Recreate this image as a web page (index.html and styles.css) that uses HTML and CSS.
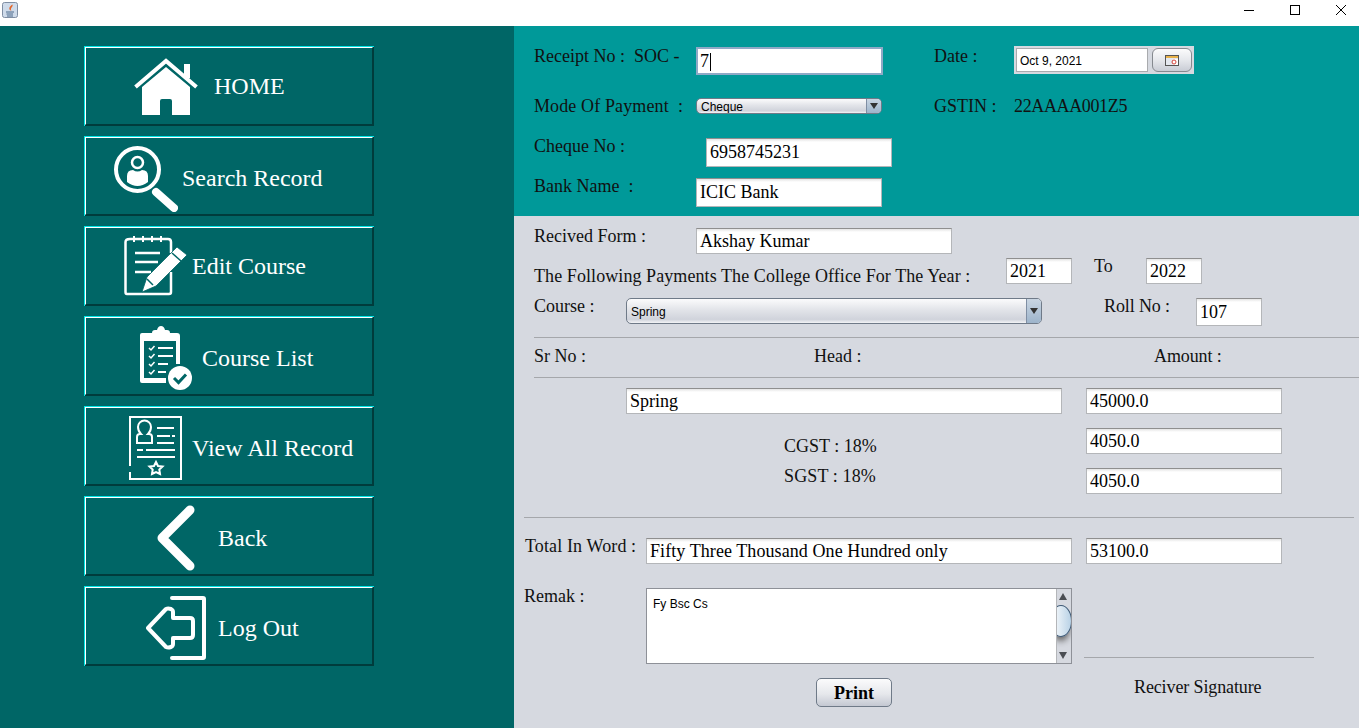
FILE: index.html
```html
<!DOCTYPE html>
<html lang="en">
<head>
    <meta charset="UTF-8">
    <meta name="viewport" content="width=device-width, initial-scale=1.0">
    <title>Fee Receipt</title>
    <link rel="stylesheet" href="styles.css">
</head>
<body>

    <header class="titlebar">
        <svg class="app-icon" width="16" height="16" viewBox="0 0 16 16">
            <rect x="0.5" y="0.5" width="15" height="15" rx="2" fill="#cfdbea" stroke="#7f8ea3"/>
            <path d="M10.500 2.500 C11.500 5 7.500 6 9.500 9 C6 7.500 7 4.500 10.500 2.500Z" fill="#e2662a"/>
            <path d="M4 10 H12 M4.500 12 H11 M5 14 H11" stroke="#4c6a8c" stroke-width="1"/>
        </svg>
        <div class="win-buttons">
            <svg width="46" height="26" viewBox="0 0 46 26"><path d="M23 10.500 H33" stroke="#000"/></svg>
            <svg width="46" height="26" viewBox="0 0 46 26"><rect x="23.500" y="5.500" width="9" height="9" fill="none" stroke="#000"/></svg>
            <svg width="46" height="26" viewBox="0 0 46 26"><path d="M23 5 L33 15 M33 5 L23 15" stroke="#000"/></svg>
        </div>
    </header>

    <div class="window">
        <nav class="sidebar">
            <button class="nav-btn nav-home">
                <svg width="64" height="58" viewBox="0 0 64 58">
                    <path d="M1.500 29 L32 3 L62.500 29" fill="none" stroke="#fff" stroke-width="4" stroke-linejoin="miter"/>
                    <rect x="50" y="6" width="6" height="14" fill="#fff"/>
                    <path d="M8 29 L32 9 L56 29 V57 H38 V43 Q38 41 36 41 H28 Q26 41 26 43 V57 H8 Z" fill="#fff"/>
                </svg>
                <span>HOME</span>
            </button>
            <button class="nav-btn nav-search">
                <svg width="64" height="66" viewBox="0 0 64 66">
                    <circle cx="23.500" cy="23.500" r="21.500" fill="none" stroke="#fff" stroke-width="4"/>
                    <circle cx="23.500" cy="16.500" r="5.500" fill="none" stroke="#fff" stroke-width="2.500"/>
                    <path d="M13 36 V30 Q13 24 19 24 Q23.500 27 28 24 Q34 24 34 30 V36 Q23.500 44 13 36Z" fill="#fff"/>
                    <path d="M42 46 L60 62" stroke="#fff" stroke-width="8" stroke-linecap="round"/>
                </svg>
                <span>Search Record</span>
            </button>
            <button class="nav-btn nav-edit">
                <svg width="64" height="60" viewBox="0 0 64 60">
                    <path d="M6 3 H44 Q47 3 47 6 V17 M47 36 V56 Q47 58 45 58 H3 Q1.500 58 1.500 56 V6 Q1.500 3 6 3" fill="none" stroke="#fff" stroke-width="2.500"/>
                    <path d="M10 0 V6 M19 0 V6 M28 0 V6 M37 0 V6" stroke="#fff" stroke-width="2"/>
                    <path d="M11 17 H36 M11 26 H34 M11 36 H27" stroke="#fff" stroke-width="2.500"/>
                    <path d="M53 11 L63 19 L32 50 L18 56 L23 41 Z" fill="#fff" stroke="#006666" stroke-width="0.800"/>
                    <path d="M48 17 L57 25" stroke="#006666" stroke-width="1.500"/>
                    <path d="M23 43 L29 49" stroke="#006666" stroke-width="1.500"/>
                </svg>
                <span>Edit Course</span>
            </button>
            <button class="nav-btn nav-list">
                <svg width="53" height="64" viewBox="0 0 53 64">
                    <path d="M3 7 H38 Q41 7 41 10 V38 H37 V15 H5 V52 H27 V57 H3 Q1 57 1 55 V9 Q1 7 3 7Z" fill="#fff"/>
                    <path d="M13 11 V7 Q13 4 16 4 H18 Q19 0 22 0 Q25 0 26 4 H28 Q31 4 31 7 V11 Z" fill="#fff"/>
                    <path d="M10 22 L12 24 L15.500 20 M10 30 L12 32 L15.500 28 M10 38 L12 40 L15.500 36 M10 46 L12 48 L15.500 44" fill="none" stroke="#fff" stroke-width="1.500"/>
                    <path d="M19 22 H34 M19 30 H34 M19 38 H29 M19 46 H27" stroke="#fff" stroke-width="2"/>
                    <circle cx="41" cy="52" r="12" fill="#fff"/>
                    <path d="M35 52 L39.500 56.500 L47 48.500" fill="none" stroke="#006666" stroke-width="3"/>
                </svg>
                <span>Course List</span>
            </button>
            <button class="nav-btn nav-view">
                <svg width="53" height="64" viewBox="0 0 53 64">
                    <path d="M1 50 V1 H52 V63 H1 V56" fill="none" stroke="#fff" stroke-width="2"/>
                    <path d="M8 27 V21 Q8 18 11 18 H12 Q9 15 9 11 A6.500 6.500 0 0 1 22 11 Q22 15 19 18 H20 Q23 18 23 21 V27 Z" fill="none" stroke="#fff" stroke-width="2"/>
                    <path d="M28 12 H45 M28 20 H41 M43 20 H46 M28 27 H45 M8 34 H14 M17 34 H46 M8 41 H46" stroke="#fff" stroke-width="2"/>
                    <path d="M27 46 L29 50 L33.500 50.500 L30.300 53.500 L31 58 L27 56 L23 58 L23.700 53.500 L20.500 50.500 L25 50 Z" fill="none" stroke="#fff" stroke-width="2"/>
                </svg>
                <span>View All Record</span>
            </button>
            <button class="nav-btn nav-back">
                <svg width="40" height="66" viewBox="0 0 40 66">
                    <path d="M34 5 L6 33 L34 61" fill="none" stroke="#fff" stroke-width="9" stroke-linecap="round" stroke-linejoin="round"/>
                </svg>
                <span>Back</span>
            </button>
            <button class="nav-btn nav-logout">
                <svg width="60" height="64" viewBox="0 0 60 64">
                    <path d="M26 2 H57 Q58 2 58 3 V61 Q58 62 57 62 H26" fill="none" stroke="#fff" stroke-width="4" stroke-linecap="round"/>
                    <path d="M2 32 L20 13 Q22 12 25 13 Q27 14 27 16 V22 H44 Q47 22 47 25 V39 Q47 42 44 42 H27 V48 Q27 50 25 51 Q22 52 20 51 Z" fill="none" stroke="#fff" stroke-width="4" stroke-linejoin="round"/>
                </svg>
                <span>Log Out</span>
            </button>
        </nav>

        <main class="content">
            <section class="payment-panel">
                <div class="row row-50">
                    <div class="label w-162"><pre>Receipt No :  SOC -</pre></div>
                    <div class="field field-focus w-187 mt-1">7<i class="caret"></i></div>
                    <div class="label w-80 ml-51">Date :</div>
                    <div class="date-picker">
                        <div class="date-text">Oct 9, 2021</div>
                        <div class="date-btn">
                            <svg width="14" height="11" viewBox="0 0 14 11">
                                <rect x="0.500" y="0.500" width="13" height="10" fill="#e4e8ef" stroke="#555"/>
                                <rect x="1" y="1" width="12" height="2" fill="#e8b24a"/>
                                <rect x="8" y="4" width="5" height="6" fill="#fff"/>
                                <circle cx="9" cy="7" r="2" fill="none" stroke="#d8433b"/>
                            </svg>
                        </div>
                    </div>
                </div>
                <div class="row">
                    <div class="label w-162 wide"><pre>Mode Of Payment  :</pre></div>
                    <div class="combo combo-small w-186 mt-2">
                        <span>Cheque</span>
                        <div class="combo-arrow"></div>
                    </div>
                    <div class="label w-80 ml-52">GSTIN :</div>
                    <div class="label narrow">22AAAA001Z5</div>
                </div>
                <div class="row">
                    <div class="label w-172">Cheque No :</div>
                    <div class="field w-186 h-29 mt-2">6958745231</div>
                </div>
                <div class="row">
                    <div class="label w-162"><pre>Bank Name  :</pre></div>
                    <div class="field w-186 h-29 mt-2">ICIC Bank</div>
                </div>
            </section>

            <section class="details-panel">
                <div class="row pad-top">
                    <div class="label w-162">Recived Form :</div>
                    <div class="field w-256 mt-2">Akshay Kumar</div>
                </div>
                <div class="row">
                    <div class="label w-472 mt-10 wide-long">The Following Payments The College Office For The Year :</div>
                    <div class="field w-66 mt-2">2021</div>
                    <div class="label w-52 ml-22">To</div>
                    <div class="field w-56 mt-2">2022</div>
                </div>
                <div class="row">
                    <div class="label w-92">Course :</div>
                    <div class="combo w-416 mt-2">
                        <span>Spring</span>
                        <div class="combo-arrow"></div>
                    </div>
                    <div class="label w-92 ml-62 tight">Roll No :</div>
                    <div class="field w-66 h-28 mt-2">107</div>
                </div>
                <div class="rule"></div>
                <div class="row mid">
                    <div class="label w-280">Sr No :</div>
                    <div class="label w-340">Head :</div>
                    <div class="label tight">Amount :</div>
                </div>
                <div class="rule"></div>

                <div class="charges">
                    <div class="row">
                        <div class="field w-436 ml-92">Spring</div>
                        <div class="field w-196 ml-24">45000.0</div>
                    </div>
                    <div class="row">
                        <div class="label w-302 ml-250 mt-8">CGST : 18%</div>
                        <div class="field w-196">4050.0</div>
                    </div>
                    <div class="row">
                        <div class="label w-302 ml-250 mt-neg-2 wide">SGST : 18%</div>
                        <div class="field w-196">4050.0</div>
                    </div>
                </div>

                <div class="rule rule-short"></div>

                <div class="row total-row">
                    <div class="label w-121 ml-neg-9 wide">Total In Word :</div>
                    <div class="field w-426 mt-2 wide-long">Fifty Three Thousand One Hundred only</div>
                    <div class="field w-196 ml-14 mt-2">53100.0</div>
                </div>

                <div class="remark-block">
                    <div class="label w-122 ml-neg-10">Remak :</div>
                    <div class="remark-col">
                        <div class="remark-box">
                            <div class="remark-text">Fy Bsc Cs</div>
                            <div class="scrollbar">
                                <div class="scroll-up"></div>
                                <div class="scroll-track"><div class="scroll-thumb"></div></div>
                                <div class="scroll-down"></div>
                            </div>
                        </div>
                        <button class="print-btn">Print</button>
                    </div>
                    <div class="signature">
                        <div class="signature-text tight">Reciver Signature</div>
                    </div>
                </div>
            </section>
        </main>
    </div>

</body>
</html>
```

FILE: styles.css
```css
* {
    box-sizing: border-box;
}

body {
    margin: 0;
    padding: 0;
    width: 1359px;
    height: 728px;
    overflow: hidden;
    font-family: 'Liberation Serif', serif;
    font-size: 18px;
    color: #111;
    background-color: #fff;
}

pre {
    margin: 0;
    font: inherit;
}

/* title bar */
.titlebar {
    height: 26px;
    display: flex;
    justify-content: space-between;
    background-color: #fff;
}

.app-icon {
    margin: 2px;
}

.win-buttons {
    display: flex;
}

.win-buttons svg {
    display: block;
}

.window {
    display: flex;
    height: 702px;
}

/* left menu */
.sidebar {
    width: 514px;
    padding: 20px 0 0 84px;
    background-color: #006666;
    display: flex;
    flex-direction: column;
    gap: 10px;
}

.nav-btn {
    width: 290px;
    height: 80px;
    display: flex;
    align-items: center;
    padding: 0;
    background-color: #006666;
    color: #fff;
    font-family: 'Liberation Serif', serif;
    font-size: 24px;
    border-style: solid;
    border-width: 2px;
    border-color: #fff #003c3c #003c3c #fff;
    outline: none;
    position: relative;
}

.nav-btn::before {
    content: "";
    position: absolute;
    left: -2px;
    right: -2px;
    top: -2px;
    bottom: -2px;
    border-top: 1px solid #00e5e5;
    border-left: 1px solid #00e5e5;
}

.nav-btn svg {
    display: block;
    flex: none;
}

.nav-home { padding-left: 48px; gap: 16px; padding-top: 2px; }
.nav-home span { margin-top: -2px; }
.nav-search { padding-left: 28px; gap: 4px; padding-top: 6px; }
.nav-search span { margin-top: -2px; }
.nav-edit { padding-left: 38px; gap: 4px; }
.nav-list { padding-left: 53px; gap: 10px; padding-top: 4px; }
.nav-view { padding-left: 43px; gap: 10px; padding-top: 4px; }
.nav-back { padding-left: 70px; gap: 22px; padding-top: 4px; }
.nav-logout { padding-left: 60px; gap: 12px; padding-top: 4px; }

/* right side */
.content {
    width: 845px;
}

.payment-panel {
    height: 190px;
    padding: 20px 0 0 20px;
    background-color: #009999;
}

.details-panel {
    height: 512px;
    padding-left: 20px;
    background-color: #d6d9e0;
}

.row {
    display: flex;
    align-items: flex-start;
    height: 40px;
}

.row-50 { height: 50px; }
.pad-top { padding-top: 10px; }

.label {
    flex: none;
    line-height: 20px;
    white-space: nowrap;
}

.field {
    flex: none;
    height: 26px;
    padding: 0 3px;
    line-height: 24px;
    color: #000;
    background: #fff linear-gradient(#e4e4e4, #fff 3px);
    border: 1px solid #b4b6b9;
    border-top-color: #8f8f8f;
    white-space: nowrap;
}

.field-focus {
    height: 28px;
    padding-left: 2px;
    border: 2px solid #8fa9c6;
    background: #fff;
    line-height: 24px;
}

.caret {
    display: inline-block;
    width: 1px;
    height: 18px;
    margin-left: 1px;
    background-color: #000;
    vertical-align: -4px;
}

/* small spacing fixes, the original font is hinted a bit different */
.wide { letter-spacing: 0.12px; }
.wide-long { letter-spacing: 0.08px; }
.tight { letter-spacing: -0.12px; }
.narrow { letter-spacing: -0.36px; }

.combo {
    flex: none;
    height: 26px;
    display: flex;
    justify-content: space-between;
    border: 1px solid #6f7a88;
    border-radius: 5px;
    font-family: 'Liberation Sans', sans-serif;
    font-size: 12px;
    line-height: 26px;
    color: #000;
    background: linear-gradient(#fbfbfc, #e2e4e9 45%, #d0d3db 85%, #f3f4f6);
    overflow: hidden;
}

.combo span {
    padding-left: 4px;
}

.combo-small {
    height: 16px;
    line-height: 16px;
}

.combo-arrow {
    width: 15px;
    border-left: 1px solid #7f8ea3;
    background: linear-gradient(#c9d5e2, #9db4cb);
    position: relative;
}

.combo-arrow::after {
    content: "";
    position: absolute;
    left: 3px;
    top: 50%;
    margin-top: -3px;
    border-style: solid;
    border-width: 6px 4px 0 4px;
    border-color: #333 transparent transparent transparent;
}

.date-picker {
    width: 180px;
    height: 28px;
    padding: 2px;
    display: flex;
    gap: 4px;
    background-color: #d6d9e0;
}

.date-text {
    width: 132px;
    height: 24px;
    padding-left: 3px;
    font-family: 'Liberation Sans', sans-serif;
    font-size: 12px;
    line-height: 24px;
    color: #000;
    background-color: #fff;
    border: 1px solid #a9abae;
}

.date-btn {
    width: 40px;
    height: 24px;
    display: flex;
    align-items: center;
    justify-content: center;
    border: 1px solid #85898f;
    border-radius: 6px;
    background: linear-gradient(#fbfbfc, #e6e8ec 50%, #c9ccd5);
}

.rule {
    height: 1px;
    margin: 1px 0 0 0;
    background-color: #a5a7ab;
}

.mid {
    height: 38px;
    padding-top: 8px;
}

.charges {
    padding-top: 10px;
    height: 139px;
}

.rule-short {
    width: 830px;
    margin: 0 0 0 -10px;
}

.total-row {
    margin-top: 18px;
    height: 50px;
}

.remark-block {
    display: flex;
    align-items: flex-start;
}

.remark-col {
    width: 426px;
    flex: none;
}

.remark-box {
    height: 76px;
    margin-top: 2px;
    display: flex;
    justify-content: space-between;
    background-color: #fff;
    border: 1px solid #8e9198;
}

.remark-text {
    padding: 8px 0 0 6px;
    font-family: 'Liberation Sans', sans-serif;
    font-size: 12px;
    line-height: 14px;
    color: #000;
}

.scrollbar {
    width: 15px;
    display: flex;
    flex-direction: column;
    justify-content: space-between;
    background-color: #d6d9e0;
    border-left: 1px solid #b4b6b9;
}

.scroll-up,
.scroll-down {
    width: 0;
    height: 0;
    margin: 4px 0 4px 2px;
    border-style: solid;
    border-width: 0 4px 7px 4px;
    border-color: transparent transparent #4a4d52 transparent;
}

.scroll-down {
    border-width: 7px 4px 0 4px;
    border-color: #4a4d52 transparent transparent transparent;
}

.scroll-track {
    flex: 1;
    overflow: hidden;
}

.scroll-thumb {
    width: 22px;
    height: 32px;
    margin: 1px 0 0 -7px;
    border: 1px solid #3f5a76;
    border-radius: 50%;
    background: linear-gradient(90deg, #fff, #b9d2e6);
    box-shadow: 0 6px 6px -2px #666;
}

.print-btn {
    display: block;
    width: 76px;
    height: 29px;
    margin: 14px 0 0 170px;
    padding: 2px 0 0 0;
    font-family: 'Liberation Serif', serif;
    font-size: 18px;
    font-weight: bold;
    color: #000;
    border: 1px solid #6f7a88;
    border-radius: 5px;
    background: linear-gradient(#fbfbfc, #e6e8ec 55%, #c4c8d2);
}

.signature {
    width: 230px;
    margin: 71px 0 0 12px;
    border-top: 1px solid #a5a7ab;
    flex: none;
}

.signature-text {
    padding: 19px 0 0 50px;
    line-height: 20px;
}

/* widths and nudges for the fields */
.w-52 { width: 52px; }
.w-56 { width: 56px; }
.w-66 { width: 66px; }
.w-80 { width: 80px; }
.w-92 { width: 92px; }
.w-121 { width: 121px; }
.w-122 { width: 122px; }
.w-162 { width: 162px; }
.w-172 { width: 172px; }
.w-186 { width: 186px; }
.w-187 { width: 187px; }
.w-196 { width: 196px; }
.w-256 { width: 256px; }
.w-280 { width: 280px; }
.w-302 { width: 302px; }
.w-340 { width: 340px; }
.w-416 { width: 416px; }
.w-426 { width: 426px; }
.w-436 { width: 436px; }
.w-472 { width: 472px; }
.h-28 { height: 28px; line-height: 27px; }
.h-29 { height: 29px; line-height: 27px; }
.mt-1 { margin-top: 1px; }
.mt-2 { margin-top: 2px; }
.mt-8 { margin-top: 8px; }
.mt-10 { margin-top: 10px; }
.mt-neg-2 { margin-top: -2px; }
.ml-14 { margin-left: 14px; }
.ml-22 { margin-left: 22px; }
.ml-24 { margin-left: 24px; }
.ml-51 { margin-left: 51px; }
.ml-52 { margin-left: 52px; }
.ml-62 { margin-left: 62px; }
.ml-92 { margin-left: 92px; }
.ml-250 { margin-left: 250px; }
.ml-neg-9 { margin-left: -9px; }
.ml-neg-10 { margin-left: -10px; }
```
